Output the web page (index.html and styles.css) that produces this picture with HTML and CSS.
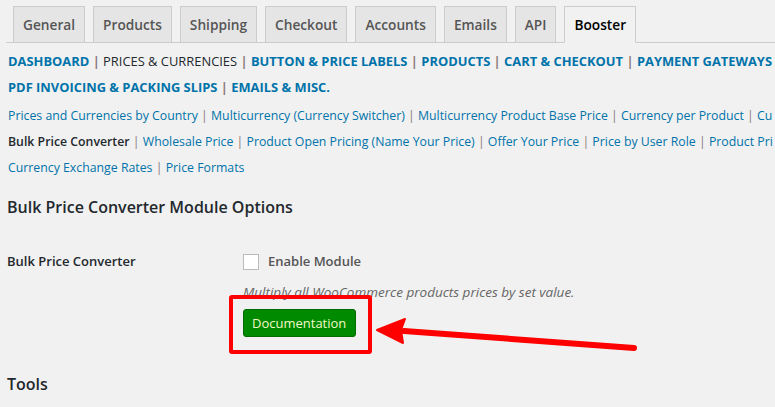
FILE: index.html
```html
<!DOCTYPE html>
<html lang="en">
<head>
  <meta charset="UTF-8">
  <title>Booster Settings</title>
  <link rel="stylesheet" href="styles.css">
</head>
<body>
  <div class="wrap">
    <nav class="tabs">
      <a class="tab">General</a>
      <a class="tab">Products</a>
      <a class="tab">Shipping</a>
      <a class="tab">Checkout</a>
      <a class="tab">Accounts</a>
      <a class="tab">Emails</a>
      <a class="tab">API</a>
      <a class="tab active">Booster</a>
    </nav>

    <div class="cats">
      <div class="line"><a>DASHBOARD</a> <span class="sep">|</span> <span class="cur">PRICES &amp; CURRENCIES</span> <span class="sep">|</span> <a>BUTTON &amp; PRICE LABELS</a> <span class="sep">|</span> <a>PRODUCTS</a> <span class="sep">|</span> <a>CART &amp; CHECKOUT</a> <span class="sep">|</span> <a>PAYMENT GATEWAYS</a></div>
      <div class="line"><a>PDF INVOICING &amp; PACKING SLIPS</a> <span class="sep">|</span> <a>EMAILS &amp; MISC.</a></div>
    </div>

    <div class="subs">
      <div class="line"><a>Prices and Currencies by Country</a> <span class="sep">|</span> <a>Multicurrency (Currency Switcher)</a> <span class="sep">|</span> <a>Multicurrency Product Base Price</a> <span class="sep">|</span> <a>Currency per Product</a> <span class="sep">|</span> <a>Cu</a></div>
      <div class="line"><span class="cur">Bulk Price Converter</span> <span class="sep">|</span> <a>Wholesale Price</a> <span class="sep">|</span> <a>Product Open Pricing (Name Your Price)</a> <span class="sep">|</span> <a>Offer Your Price</a> <span class="sep">|</span> <a>Price by User Role</a> <span class="sep">|</span> <a>Product Pri</a></div>
      <div class="line"><a>Currency Exchange Rates</a> <span class="sep">|</span> <a>Price Formats</a></div>
    </div>

    <h2 class="title">Bulk Price Converter Module Options</h2>

    <div class="field">
      <div class="field-label">Bulk Price Converter</div>
      <div class="field-body">
        <label class="check"><span class="box"></span>Enable Module</label>
        <p class="desc">Multiply all WooCommerce products prices by set value.</p>
        <div class="doc-wrap">
          <a class="doc-btn">Documentation</a>
        </div>
      </div>
    </div>

    <h2 class="title tools">Tools</h2>
  </div>

  <svg class="arrow" width="280" height="40" viewBox="0 0 280 40">
    <line x1="30" y1="14" x2="260" y2="31" stroke="#ff0000" stroke-width="6" stroke-linecap="round"/>
    <polygon points="3,13 31,2 27,13 29,26" fill="#ff0000" stroke="#ff0000" stroke-width="2" stroke-linejoin="round"/>
  </svg>
</body>
</html>
```

FILE: styles.css
```css
body { margin: 0; background: #f1f1f1; font-family: "Open Sans", Arial, sans-serif; color: #23282d; overflow: hidden; position: relative; }
a { color: #0073aa; text-decoration: none; }

.wrap { width: 775px; overflow: hidden; }

.tabs { display: flex; gap: 8px; margin-left: 6px; padding: 6px 0 0 7px; border-bottom: 1px solid #ccc; }
.tab { height: 35px; line-height: 35px; padding: 0 9px; border: 1px solid #ccc; border-bottom: none; background: #e5e5e5; color: #555; font-size: 13.7px; font-weight: 600; margin-bottom: -1px; }
.tab.active { background: #f1f1f1; color: #000; border-bottom: 1px solid #f1f1f1; }

.line { white-space: nowrap; height: 26px; line-height: 26px; }
.sep { color: #8c7a7a; }
.cats { padding: 5px 0 0 8px; font-size: 12.9px; font-weight: 700; }
.cats .cur { font-weight: 400; color: #23282d; }
.subs { padding: 3px 0 0 8px; font-size: 12.3px; }
.subs .cur { font-weight: 600; color: #23282d; }

.title { margin: 15px 0 0 7px; font-size: 16px; font-weight: 600; }

.field { display: flex; margin-top: 35px; padding-left: 7px; }
.field-label { width: 236px; font-size: 13px; font-weight: 600; line-height: 17px; }
.field-body { font-size: 13px; }
.check { display: flex; align-items: center; gap: 9px; color: #555; font-weight: 600; font-size: 13px; line-height: 17px; }
.box { width: 14px; height: 14px; border: 1px solid #bbb; background: #fff; }
.desc { margin: 13px 0 0; color: #666; font-style: italic; font-size: 13.5px; line-height: 18px; }

.doc-wrap { display: inline-block; margin: -6px 0 0 -14px; padding: 10px 12px 13px 10px; border: 4px solid #ff0000; border-radius: 3px; }
.doc-btn { display: block; background: #008a00; color: #f4f8c8; font-size: 13px; height: 26px; line-height: 26px; padding: 0 9px 0 8px; border-radius: 3px; border: 1px solid #006b00; }

.tools { margin-top: 19px; }

.arrow { position: absolute; left: 374px; top: 317px; }
```
